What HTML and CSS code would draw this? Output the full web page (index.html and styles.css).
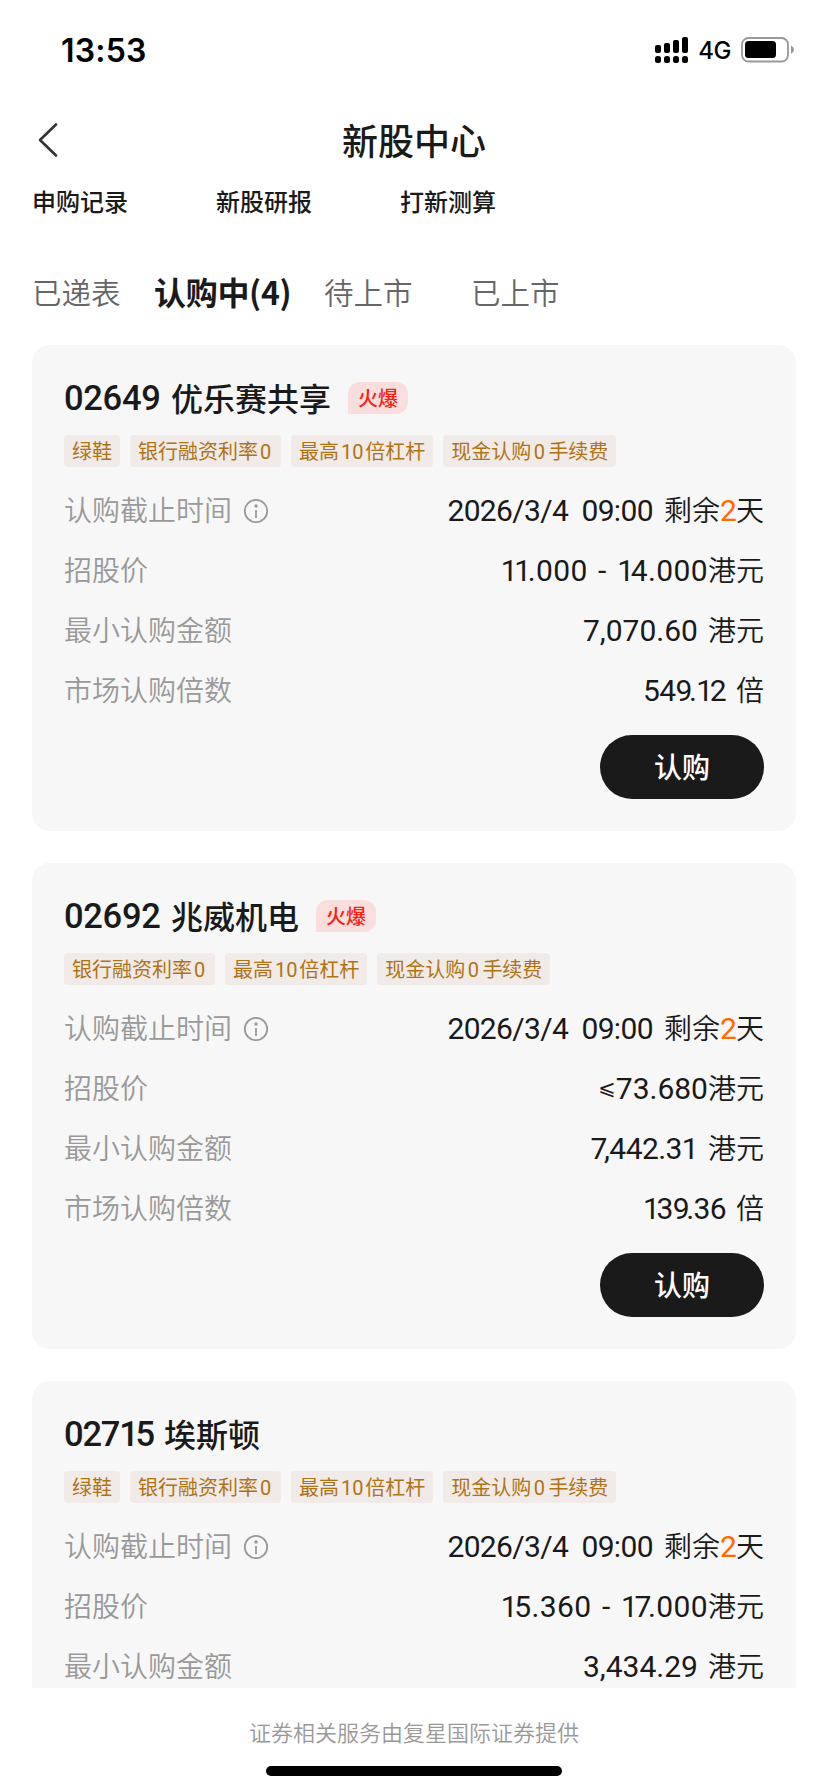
FILE: index.html
```html
<!DOCTYPE html>
<html lang="zh-CN">
<head>
<meta charset="utf-8">
<title>新股中心</title>
<link rel="stylesheet" href="styles.css">
</head>
<body>
<div class="screen">
  <div class="status">
    <span class="clock">13:53</span>
    <div class="indicators">
      <svg class="signal" width="33" height="27" viewBox="0 0 33 27">
        <rect x="0" y="8" width="6" height="8" rx="2"/><rect x="9" y="6" width="6" height="10" rx="2"/><rect x="18" y="3" width="6" height="13" rx="2"/><rect x="27" y="0" width="6" height="16" rx="2"/>
        <rect x="0" y="19" width="6" height="7" rx="2.5"/><rect x="9" y="19" width="6" height="7" rx="2.5"/><rect x="18" y="19" width="6" height="7" rx="2.5"/><rect x="27" y="19" width="6" height="7" rx="2.5"/>
      </svg>
      <span class="network">4G</span>
      <svg class="battery" width="54" height="26" viewBox="0 0 54 26">
        <rect x="1" y="1" width="46" height="23.5" rx="6.5" fill="none" stroke="#999" stroke-width="1.8"/>
        <rect x="4" y="4" width="31" height="17" rx="3.5"/>
        <path d="M50 8.5q3 1.5 3 4.2t-3 4.200z" fill="#999"/>
      </svg>
    </div>
  </div>
  <header class="nav">
    <svg class="back" width="24" height="36" viewBox="0 0 24 36"><path d="M19 2.500 3 18l16 15.500" fill="none" stroke="#333" stroke-width="2.600" stroke-linecap="round" stroke-linejoin="round"/></svg>
    <h1 class="page-title">新股中心</h1>
  </header>
  <nav class="links"><a>申购记录</a><a>新股研报</a><a>打新测算</a></nav>
  <nav class="tabs"><a class="tab">已递表</a><a class="tab active">认购中(4)</a><a class="tab">待上市</a><a class="tab last">已上市</a></nav>
  <main class="list">
    <section class="card">
      <h2 class="stock"><span class="code">02649</span><span class="name">优乐赛共享</span><em class="hot">火爆</em></h2>
      <div class="tags"><span>绿鞋</span><span>银行融资利率<b>0</b></span><span>最高<b>10</b>倍杠杆</span><span class="fee">现金认购<b>0</b>手续费</span></div>
      <div class="row"><span class="label">认购截止时间<svg class="info" width="26" height="26" viewBox="0 0 26 26"><circle cx="13" cy="13" r="11.200"/><path d="M13 12v8"/><circle class="dot" cx="13" cy="8" r="1.700"/></svg></span><span class="value"><b class="date">2026/3/4 09:00</b>剩余<i>2</i>天</span></div>
      <div class="row"><span class="label">招股价</span><span class="value"><b class="range"><u>11</u>.000 - <u>1</u>4.000</b>港元</span></div>
      <div class="row"><span class="label">最小认购金额</span><span class="value"><b class="amount">7,070.60</b>港元</span></div>
      <div class="row"><span class="label">市场认购倍数</span><span class="value"><b class="times">54<u>9</u>.<u>1</u>2</b>倍</span></div>
      <button class="subscribe">认购</button>
    </section>
    <section class="card">
      <h2 class="stock"><span class="code">02692</span><span class="name">兆威机电</span><em class="hot">火爆</em></h2>
      <div class="tags"><span>银行融资利率<b>0</b></span><span>最高<b>10</b>倍杠杆</span><span class="fee">现金认购<b>0</b>手续费</span></div>
      <div class="row"><span class="label">认购截止时间<svg class="info" width="26" height="26" viewBox="0 0 26 26"><circle cx="13" cy="13" r="11.200"/><path d="M13 12v8"/><circle class="dot" cx="13" cy="8" r="1.700"/></svg></span><span class="value"><b class="date">2026/3/4 09:00</b>剩余<i>2</i>天</span></div>
      <div class="row"><span class="label">招股价</span><span class="value"><b class="cap"><small>⩽</small>73.680</b>港元</span></div>
      <div class="row"><span class="label">最小认购金额</span><span class="value"><b class="amount tight"><u>7</u>,442.31</b>港元</span></div>
      <div class="row"><span class="label">市场认购倍数</span><span class="value"><b class="times"><u>1</u>3<u>9</u>.36</b>倍</span></div>
      <button class="subscribe">认购</button>
    </section>
    <section class="card">
      <h2 class="stock"><span class="code narrow">027<u>1</u>5</span><span class="name">埃斯顿</span></h2>
      <div class="tags"><span>绿鞋</span><span>银行融资利率<b>0</b></span><span>最高<b>10</b>倍杠杆</span><span class="fee">现金认购<b>0</b>手续费</span></div>
      <div class="row"><span class="label">认购截止时间<svg class="info" width="26" height="26" viewBox="0 0 26 26"><circle cx="13" cy="13" r="11.200"/><path d="M13 12v8"/><circle class="dot" cx="13" cy="8" r="1.700"/></svg></span><span class="value"><b class="date">2026/3/4 09:00</b>剩余<i>2</i>天</span></div>
      <div class="row"><span class="label">招股价</span><span class="value"><b class="range"><u>1</u>5.360 - <u>17</u>.000</b>港元</span></div>
      <div class="row"><span class="label">最小认购金额</span><span class="value"><b class="amount">3,434.29</b>港元</span></div>
    </section>
  </main>
  <footer class="footer"><p>证券相关服务由复星国际证券提供</p><div class="home-bar"></div></footer>
</div>
</body>
</html>
```

FILE: styles.css
```css
* { box-sizing: border-box; margin: 0; padding: 0; }
body { background: #fff; }
.screen {
  width: 828px;
  height: 1792px;
  display: flex;
  flex-direction: column;
  overflow: hidden;
  background: #fff;
  color: #1a1a1a;
  font-family: "Noto Sans CJK SC", sans-serif;
}
.status {
  flex: none;
  height: 100px;
  padding: 0 33px 0 61px;
  display: flex;
  justify-content: space-between;
  align-items: center;
  color: #000;
  font-family: Inter, sans-serif;
}
.clock { font-size: 32px; font-weight: 600; letter-spacing: .2px; }
.indicators { display: flex; align-items: center; }
.network { margin: 1px 10px 0 10px; font-size: 24px; font-weight: 500; letter-spacing: -.5px; }
.nav {
  flex: none;
  height: 80px;
  padding: 0 37px;
  display: grid;
  grid-template-columns: 60px 1fr 60px;
  align-items: center;
}
.page-title { padding-bottom: 3px; text-align: center; font-size: 36px; line-height: 48px; font-weight: 500; }
.links { flex: none; height: 44px; padding-left: 32px; display: flex; gap: 88px; font-size: 24px; line-height: 41px; font-weight: 500; }
.tabs { flex: none; height: 121px; padding: 39px 32px 0; display: flex; line-height: 56px; font-size: 29.500px; color: #666; }
.tab { width: 122px; font-weight: 350; white-space: nowrap; }
.tab.active { width: 170px; font-size: 32px; font-weight: 700; color: #1a1a1a; letter-spacing: -.3px; }
.tab.last { margin-left: 25px; }
.list { flex: none; height: 1343px; padding: 0 32px; overflow: hidden; }
.card { height: 486px; margin-bottom: 32px; padding: 32px; border-radius: 18px; background: #f7f7f7; }
.stock { height: 42px; display: flex; align-items: center; font-size: 32px; line-height: 42px; font-weight: 500; }
.code { width: 107px; font-family: Roboto, sans-serif; font-size: 34.500px; font-weight: 500; letter-spacing: -.3px; }
.code.narrow { width: 100px; letter-spacing: -1.200px; }
.name { padding-bottom: 3px; }
.hot {
  height: 32px;
  margin-left: 17px;
  padding: 0 10px;
  border-radius: 12px 12px 12px 0;
  background: #fadddd;
  color: #f5230f;
  font-size: 20px;
  line-height: 32px;
  font-style: normal;
}
.tags { height: 32px; margin: 16px 0 14px; display: flex; gap: 10px; }
.tags span {
  padding: 0 8px;
  border-radius: 4px;
  background: #f0eae8;
  color: #b07314;
  font-size: 20px;
  line-height: 32px;
  white-space: nowrap;
}
.tags b { margin: 0 1.800px 0 2px; font-family: Roboto, sans-serif; font-weight: 400; font-size: 20px; }
.tags .fee b { margin: 0 3.300px 0 2.500px; }
.row { height: 60px; display: flex; justify-content: space-between; font-size: 28px; line-height: 57px; white-space: nowrap; }
.label { display: flex; color: #999; font-weight: 350; }
.info { margin: 17px 0 0 11px; fill: none; stroke: #999; stroke-width: 1.800; }
.info .dot { fill: #999; stroke: none; }
.value { font-weight: 350; }
.value b, .value i { font-family: Roboto, sans-serif; font-size: 30px; line-height: 1; font-weight: 400; font-style: normal; }
.value i { color: #ff6a00; letter-spacing: -.8px; }
.value small { font-family: "DejaVu Sans", sans-serif; font-size: 21px; vertical-align: 4px; }
u { text-decoration: none; letter-spacing: -3.400px; }
.value .date { margin-right: 11px; letter-spacing: -.65px; word-spacing: 6.500px; }
.value .range { letter-spacing: .4px; word-spacing: 2.500px; }
.amount, .times { margin-right: 10px; }
.value .times, .value .tight { letter-spacing: -.6px; }
.subscribe {
  display: block;
  width: 164px;
  height: 64px;
  margin: 14px 0 0 auto;
  padding-bottom: 2px;
  border: 0;
  border-radius: 32px;
  background: #1a1a1a;
  color: #fff;
  font: 500 28px/62px "Noto Sans CJK SC", sans-serif;
}
.footer { flex: 1; display: flex; flex-direction: column; align-items: center; }
.footer p { margin-top: 27px; font-size: 22px; line-height: 32px; font-weight: 350; color: #999; }
.home-bar { width: 296px; height: 10px; margin-top: 19px; border-radius: 5px; background: #000; }
```
